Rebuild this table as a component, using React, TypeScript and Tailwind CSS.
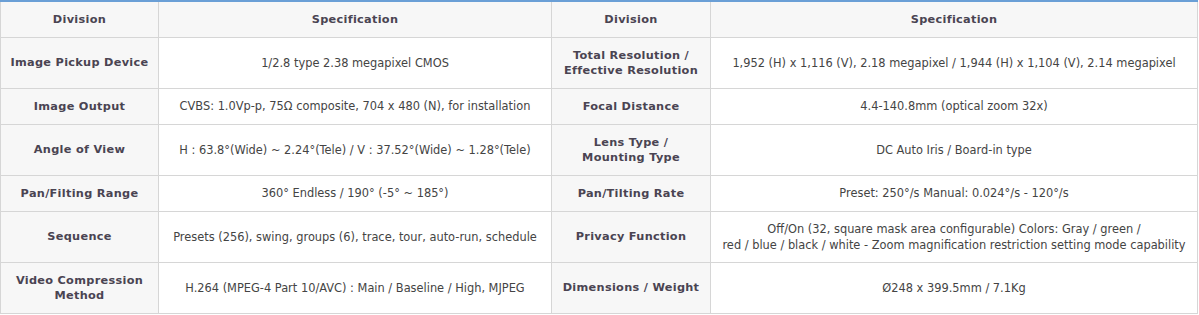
const rows: [string, string, string, string][] = [
  [
    "Image Pickup Device",
    "1/2.8 type 2.38 megapixel CMOS",
    "Total Resolution /\nEffective Resolution",
    "1,952 (H) x 1,116 (V), 2.18 megapixel / 1,944 (H) x 1,104 (V), 2.14 megapixel",
  ],
  [
    "Image Output",
    "CVBS: 1.0Vp-p, 75Ω composite, 704 x 480 (N), for installation",
    "Focal Distance",
    "4.4-140.8mm (optical zoom 32x)",
  ],
  [
    "Angle of View",
    "H : 63.8°(Wide) ~ 2.24°(Tele) / V : 37.52°(Wide) ~ 1.28°(Tele)",
    "Lens Type /\nMounting Type",
    "DC Auto Iris / Board-in type",
  ],
  [
    "Pan/Filting Range",
    "360° Endless / 190° (-5° ~ 185°)",
    "Pan/Tilting Rate",
    "Preset: 250°/s Manual: 0.024°/s - 120°/s",
  ],
  [
    "Sequence",
    "Presets (256), swing, groups (6), trace, tour, auto-run, schedule",
    "Privacy Function",
    "Off/On (32, square mask area configurable) Colors: Gray / green /\nred / blue / black / white - Zoom magnification restriction setting mode capability",
  ],
  [
    "Video Compression\nMethod",
    "H.264 (MPEG-4 Part 10/AVC) : Main / Baseline / High, MJPEG",
    "Dimensions / Weight",
    "Ø248 x 399.5mm / 7.1Kg",
  ],
];

const tall = [true, false, true, false, true, true];

const label =
  "border border-[#d6d6d6] bg-[#f7f7f7] text-center font-bold text-[11.3px] leading-[15px] tracking-[0.3px] text-[#4a4452] whitespace-pre-line";
const value =
  "border border-[#d6d6d6] bg-white text-center text-[11.4px] leading-[16px] text-[#444] whitespace-pre";

export default function App() {
  return (
    <div className="w-[1199px] h-[315px] bg-white" style={{ fontFamily: '"DejaVu Sans", "Noto Sans CJK KR", sans-serif' }}>
      <table className="w-[1197px] table-fixed border-collapse border-t-2 border-t-[#6a9fd6]">
        <colgroup>
          <col className="w-[158px]" />
          <col className="w-[393px]" />
          <col className="w-[159px]" />
          <col className="w-[487px]" />
        </colgroup>
        <thead>
          <tr className="h-[36px]">
            <th className={label + " border-t-0"}>Division</th>
            <th className={label + " border-t-0"}>Specification</th>
            <th className={label + " border-t-0"}>Division</th>
            <th className={label + " border-t-0"}>Specification</th>
          </tr>
        </thead>
        <tbody>
          {rows.map((r, i) => (
            <tr key={i} className={tall[i] ? "h-[51px]" : "h-[36px]"}>
              <th className={label}>{r[0]}</th>
              <td className={value}>{r[1]}</td>
              <th className={label}>{r[2]}</th>
              <td className={value}>{r[3]}</td>
            </tr>
          ))}
        </tbody>
      </table>
    </div>
  );
}
